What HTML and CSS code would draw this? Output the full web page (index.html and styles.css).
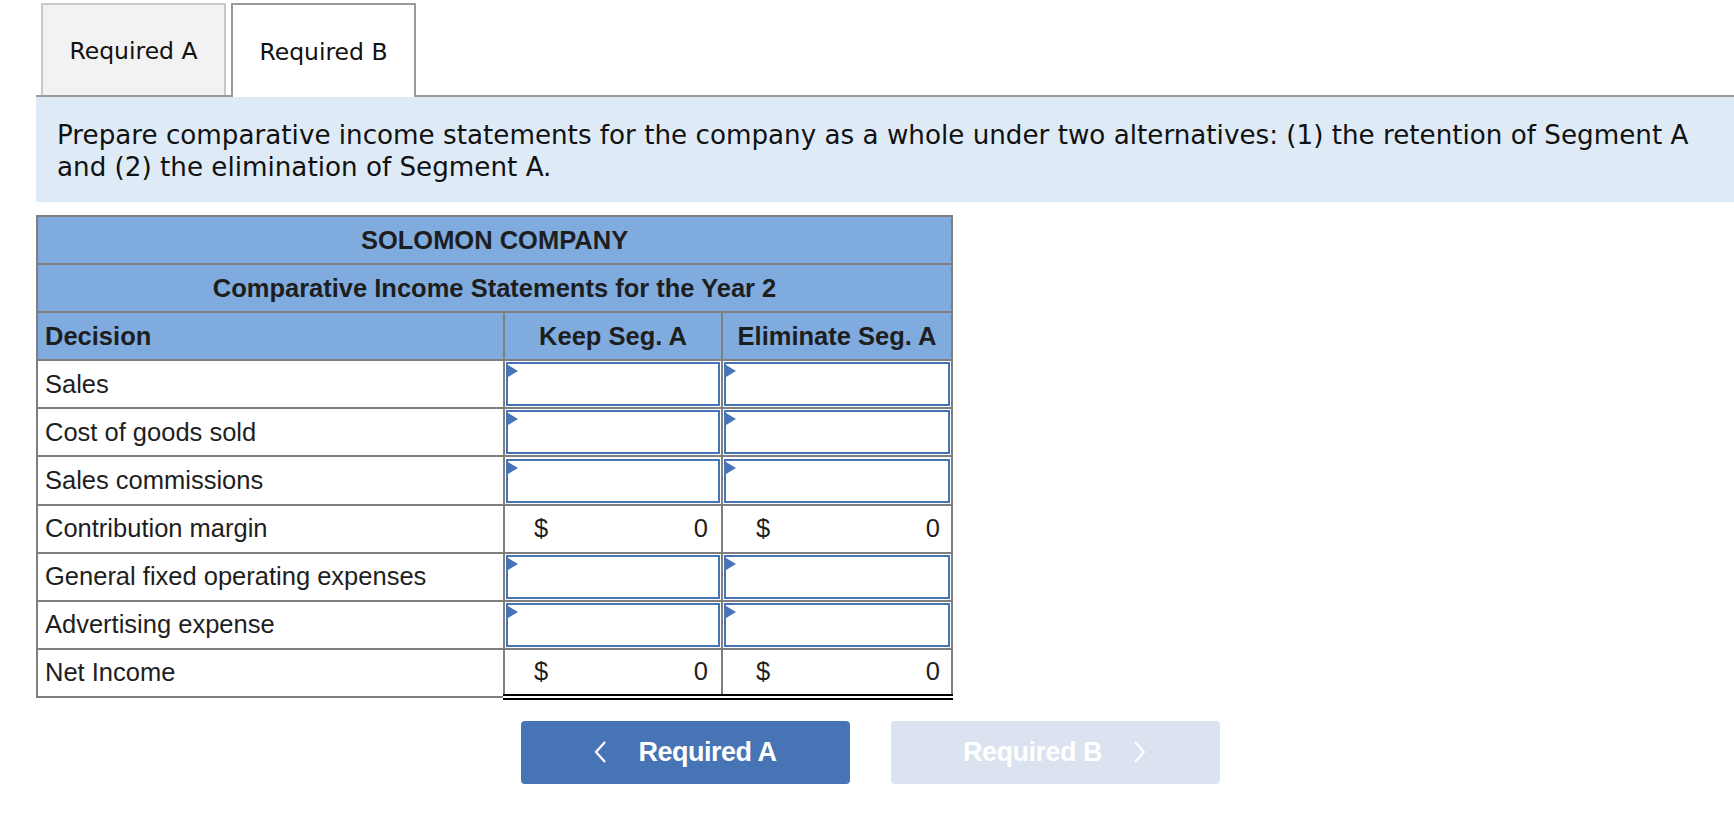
FILE: index.html
```html
<!DOCTYPE html>
<html lang="en">
<head>
<meta charset="utf-8">
<title>Required B</title>
<link rel="stylesheet" href="styles.css">
</head>
<body>
<div class="page">
  <div class="tabbar">
    <div class="tab">Required A</div>
    <div class="tab active">Required B</div>
  </div>
  <div class="prompt">Prepare comparative income statements for the company as a whole under two alternatives: (1) the retention of Segment A and (2) the elimination of Segment A.</div>

  <table class="sheet">
    <colgroup>
      <col class="c-label">
      <col class="c-keep">
      <col class="c-elim">
    </colgroup>
    <thead>
      <tr><th colspan="3" class="title">SOLOMON COMPANY</th></tr>
      <tr><th colspan="3" class="title">Comparative Income Statements for the Year 2</th></tr>
      <tr>
        <th class="left">Decision</th>
        <th class="center">Keep Seg. A</th>
        <th class="center">Eliminate Seg. A</th>
      </tr>
    </thead>
    <tbody>
      <tr>
        <td class="label">Sales</td>
        <td class="in"><div class="box"><span class="flag"></span></div></td>
        <td class="in"><div class="box"><span class="flag"></span></div></td>
      </tr>
      <tr>
        <td class="label">Cost of goods sold</td>
        <td class="in"><div class="box"><span class="flag"></span></div></td>
        <td class="in"><div class="box"><span class="flag"></span></div></td>
      </tr>
      <tr>
        <td class="label">Sales commissions</td>
        <td class="in"><div class="box"><span class="flag"></span></div></td>
        <td class="in"><div class="box"><span class="flag"></span></div></td>
      </tr>
      <tr>
        <td class="label">Contribution margin</td>
        <td class="val total"><div class="amt keep"><span>$</span><span>0</span></div></td>
        <td class="val total"><div class="amt elim"><span>$</span><span>0</span></div></td>
      </tr>
      <tr>
        <td class="label">General fixed operating expenses</td>
        <td class="in"><div class="box"><span class="flag"></span></div></td>
        <td class="in"><div class="box"><span class="flag"></span></div></td>
      </tr>
      <tr>
        <td class="label">Advertising expense</td>
        <td class="in"><div class="box"><span class="flag"></span></div></td>
        <td class="in"><div class="box"><span class="flag"></span></div></td>
      </tr>
      <tr>
        <td class="label">Net Income</td>
        <td class="val total final"><div class="amt keep"><span>$</span><span>0</span></div></td>
        <td class="val total final"><div class="amt elim"><span>$</span><span>0</span></div></td>
      </tr>
    </tbody>
  </table>

  <div class="nav">
    <button class="btn prev" type="button">
      <svg class="chev" width="14" height="24" viewBox="0 0 14 24"><polyline points="12,2 3,12 12,22" fill="none" stroke="#fff" stroke-width="2.2"/></svg>
      <span>Required A</span>
    </button>
    <button class="btn next" type="button">
      <span>Required B</span>
      <svg class="chev" width="14" height="24" viewBox="0 0 14 24"><polyline points="2,2 11,12 2,22" fill="none" stroke="#fff" stroke-width="2.2"/></svg>
    </button>
  </div>
</div>
</body>
</html>
```
FILE: styles.css
```css
* { box-sizing: border-box; }

html, body {
  margin: 0;
  padding: 0;
  background: #fff;
}

.page {
  padding: 3px 0 0 36px;
}

.tabbar {
  display: flex;
  gap: 5px;
  padding-left: 5px;
  border-bottom: 2px solid #9a9a9a;
}

.tab {
  width: 185px;
  height: 92px;
  display: flex;
  align-items: center;
  justify-content: center;
  font-family: "DejaVu Sans", Verdana, sans-serif;
  font-size: 23.5px;
  padding-top: 2px;
  color: #111;
  background: #f2f2f2;
  border: 2px solid #c8c8c8;
  border-bottom: none;
}

.tab.active {
  background: #fff;
  border-color: #9a9a9a;
  margin-bottom: -2px;
  height: 94px;
}

.prompt {
  background: #deebf7;
  padding: 22px 16px 19px 21px;
  font-family: "DejaVu Sans", Verdana, sans-serif;
  font-size: 26.2px;
  line-height: 32px;
  color: #111;
}

.sheet {
  margin-top: 13px;
  border-collapse: collapse;
  table-layout: fixed;
  width: 915px;
  font-family: "Liberation Sans", Arial, sans-serif;
  font-size: 25.5px;
  color: #1e1e1e;
  border: 2px solid #7f7f7f;
}

.c-label { width: 467px; }
.c-keep { width: 218px; }
.c-elim { width: 230px; }

.sheet th,
.sheet td {
  border: 2px solid #7f7f7f;
  height: 48.1px;
  padding: 0;
}

.sheet th {
  background: #80abdf;
  font-weight: bold;
  color: #1e1e1e;
}

.sheet th.title { text-align: center; }
.sheet th.left { text-align: left; padding-left: 7px; }
.sheet th.center { text-align: center; }

.sheet td.label {
  padding-left: 7px;
  text-align: left;
}

.sheet td.in {
  padding: 1px;
}

.box {
  position: relative;
  height: 44px;
  border: 2px solid #4674b5;
  background: #fff;
}

.flag {
  position: absolute;
  left: 0;
  top: 1px;
  width: 0;
  height: 0;
  border-top: 6px solid transparent;
  border-bottom: 6px solid transparent;
  border-left: 10px solid #4674b5;
}

.sheet td.val.total {
  border-top: 2px solid #000;
}

.sheet td.val.final {
  border-bottom: 6px double #000;
}

.amt {
  display: flex;
  justify-content: space-between;
  align-items: center;
}

.amt.keep { padding: 0 13px 0 29px; }
.amt.elim { padding: 0 11px 0 33px; }

.nav {
  display: flex;
  justify-content: center;
  gap: 41px;
  margin-top: 21px;
  padding-right: 30px;
}

.btn {
  width: 329px;
  height: 63px;
  border: none;
  border-radius: 4px;
  display: flex;
  align-items: center;
  justify-content: center;
  gap: 31px;
  font-family: "Liberation Sans", Arial, sans-serif;
  font-weight: bold;
  font-size: 27px;
  letter-spacing: -0.5px;
  color: #fff;
  padding: 0;
}

.btn.prev { background: #4674b5; }
.btn.next { background: #dae3ef; }

.chev { display: block; }
```
